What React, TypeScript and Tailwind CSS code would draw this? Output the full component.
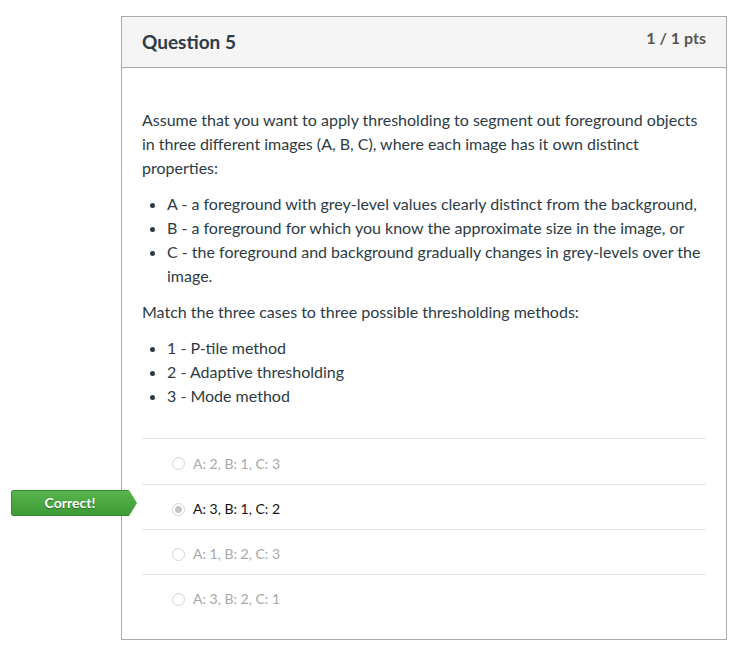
import React from "react";

const answers = [
  { label: "A: 2, B: 1, C: 3", selected: false },
  { label: "A: 3, B: 1, C: 2", selected: true },
  { label: "A: 1, B: 2, C: 3", selected: false },
  { label: "A: 3, B: 2, C: 1", selected: false },
];

export default function App() {
  return (
    <div className="w-[749px] h-[655px] bg-white pt-[16px] pl-[121px]" style={{ fontFamily: "Lato, 'Open Sans', sans-serif" }}>
      <div className="w-[606px] h-[624px] border border-[#aaaaaa] relative">
        <div className="h-[51px] bg-[#f5f5f5] border-b border-[#aaaaaa] flex justify-between px-[20px]">
          <div className="pt-[12px] text-[19px] font-bold text-[#2d3b45] leading-[26px]">Question 5</div>
          <div className="pt-[10px] text-[16px] font-bold text-[#555555] leading-[22px]">1 / 1 pts</div>
        </div>
        <div className="px-[20px] pt-[40px] text-[16px] leading-[24px] text-[#2d3b45]">
          <p>
            Assume that you want to apply thresholding to segment out foreground objects in three different images (A, B, C), where each image has it own distinct properties:
          </p>
          <ul className="list-disc pl-[25px] mt-[12px]">
            <li>A - a foreground with grey-level values clearly distinct from the background,</li>
            <li>B - a foreground for which you know the approximate size in the image, or</li>
            <li>C - the foreground and background gradually changes in grey-levels over the image.</li>
          </ul>
          <p className="mt-[12px]">Match the three cases to three possible thresholding methods:</p>
          <ul className="list-disc pl-[25px] mt-[12px]">
            <li>1 - P-tile method</li>
            <li>2 - Adaptive thresholding</li>
            <li>3 - Mode method</li>
          </ul>
          <div className="mt-[30px]">
            {answers.map((a, i) => (
              <div
                key={i}
                className={`relative ${i === 0 ? "h-[46px]" : "h-[45px]"} flex items-center pl-[30px] pt-[4px] border-t border-[#e5e5e5]`}
              >
                {a.selected && (
                  <div className="absolute left-[-131px] top-[5px] flex items-center">
                    <div
                      className="w-[117px] h-[26px] rounded-l-[3px] bg-gradient-to-b from-[#58b44c] to-[#3d9a35] border border-[#3a8a31] border-r-0 flex items-center justify-center text-white text-[14px] font-bold"
                      style={{ textShadow: "0 1px 1px rgba(0,0,0,0.35)" }}
                    >
                      Correct!
                    </div>
                    <svg width="9" height="26" viewBox="0 0 9 26" className="block">
                      <defs>
                        <linearGradient id="g" x1="0" y1="0" x2="0" y2="1">
                          <stop offset="0" stopColor="#58b44c" />
                          <stop offset="1" stopColor="#3d9a35" />
                        </linearGradient>
                      </defs>
                      <path d="M0 0 L1 0 L9 13 L1 26 L0 26 Z" fill="url(#g)" />
                    </svg>
                  </div>
                )}
                <span className="w-[13px] h-[13px] rounded-full border border-[#d5d5d5] bg-white flex items-center justify-center mr-[8px]">
                  {a.selected && <span className="w-[7px] h-[7px] rounded-full bg-[#c4c4c4]" />}
                </span>
                <span className={`text-[14px] ${a.selected ? "text-[#111111]" : "text-[#a8a8a8]"}`}>
                  {a.label}
                </span>
              </div>
            ))}
          </div>
        </div>
      </div>
    </div>
  );
}
